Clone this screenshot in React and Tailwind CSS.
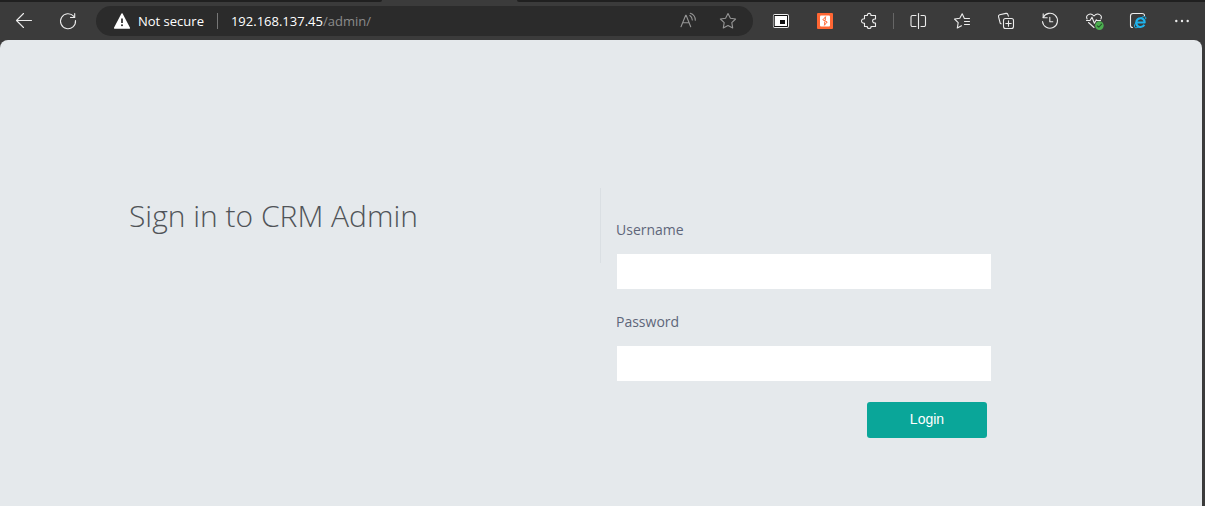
function Icon({ children, className = "" }) {
  return (
    <svg
      viewBox="0 0 20 20"
      className={"size-5 shrink-0 " + className}
      fill="none"
      stroke="currentColor"
      strokeWidth="1.1"
      strokeLinecap="round"
      strokeLinejoin="round"
      aria-hidden="true"
    >
      {children}
    </svg>
  );
}

function ToolButton({ label, children }) {
  return (
    <button type="button" aria-label={label} className="flex h-8 w-11 shrink-0 items-center justify-center text-[#ececec]">
      <Icon>{children}</Icon>
    </button>
  );
}

function AddressButton({ label, children }) {
  return (
    <button type="button" aria-label={label} className="flex h-7 w-10 shrink-0 items-center justify-center text-[#969696]">
      <Icon>{children}</Icon>
    </button>
  );
}

function AddressBar() {
  return (
    <div className="mx-1.5 flex h-[30px] min-w-0 flex-1 items-center rounded-full bg-[#2b2b2b] pr-[5px] pl-4 font-['Open_Sans',sans-serif] text-[13px] leading-5 text-white">
      <button type="button" className="flex shrink-0 items-center gap-1.5">
        <Icon>
          <path d="M10 3 L17.3 17 H2.7 Z" fill="#fff" stroke="#fff" strokeWidth="1.6" />
          <path d="M10 7.5 V12" stroke="#2b2b2b" strokeWidth="1.7" strokeLinecap="butt" />
          <circle cx="10" cy="14.3" r="1" fill="#2b2b2b" stroke="none" />
        </Icon>
        <span>Not secure</span>
      </button>
      <span className="mx-[13px] h-4 w-px shrink-0 bg-[#777777]" />
      <span className="min-w-0 flex-1 truncate">
        192.168.137.45<span className="text-[#8c8c8c]">/admin/</span>
      </span>
      <AddressButton label="Read aloud">
        <path d="M3 15.7 L7.7 4.3 H8.1 L12.7 15.7 M4.7 11.7 H11" />
        <path d="M11.8 4.5 C13.4 5.5 14.2 7 14.3 9" />
        <path d="M12.3 2.3 C15.5 3.3 17.2 5.6 17.3 9.2" />
      </AddressButton>
      <AddressButton label="Add to favorites">
        <path d="M10 2.5 L12.4 7.2 L17.6 8 L13.8 11.7 L14.7 16.9 L10 14.5 L5.3 16.9 L6.2 11.7 L2.4 8 L7.6 7.2 Z" />
      </AddressButton>
    </div>
  );
}

function Toolbar() {
  return (
    <header className="bg-[#3b3b3b]">
      <div className="flex h-0.5">
        <div className="w-[382px] rounded-br-sm bg-[#202020]" />
        <div className="w-[135px]" />
        <div className="flex-1 rounded-bl-sm bg-[#202020]" />
      </div>
      <nav className="flex h-[38px] items-center pr-px pl-0.5">
        <ToolButton label="Back">
          <path d="M17.5 9.5 H2.5 M9.5 2.5 L2.5 9.5 L9.5 16.5" />
        </ToolButton>
        <ToolButton label="Refresh">
          <path d="M17.5 9.5 A7.5 7.5 0 1 1 15.6 5.2 L16.5 6.3" />
          <path d="M16.7 2.5 V6.5 H12.5" />
        </ToolButton>
        <AddressBar />
        <ToolButton label="Picture in picture">
          <rect x="2.5" y="3.5" width="15" height="13" rx="1.5" />
          <rect x="3.5" y="4.5" width="13" height="11" fill="#fff" stroke="#111" strokeWidth="1" />
          <rect x="9" y="9" width="5" height="4" fill="#111" stroke="none" />
        </ToolButton>
        <ToolButton label="Burp Suite">
          <rect x="2" y="2" width="16" height="16" rx="1" fill="#ff6633" stroke="none" />
          <rect x="5" y="4.5" width="10" height="11" rx="1" fill="#fff" stroke="none" />
          <path d="M10.5 6 L7.8 8.8 L12.2 11 L9.5 14 M10.3 6 V9 M9.7 11 V14" stroke="#ff6633" strokeWidth="1" />
        </ToolButton>
        <ToolButton label="Extensions">
          <path d="M5.5 4.5 H8.4 C7.7 1.7 12.6 1.7 11.9 4.5 H16.5 V8 C12.6 7.4 12.6 12.6 16.5 12 V15.5 H12 C12.6 18.2 7.7 18.2 8.3 15.5 H5.5 V12.2 C1.5 12.6 1.5 7.4 5.5 7.8 Z" />
        </ToolButton>
        <span className="mx-0.5 h-4 w-px shrink-0 bg-[#666666]" />
        <ToolButton label="Split screen">
          <path d="M10.5 2.5 V17.5" />
          <path d="M8 4.5 H4.5 A1.5 1.5 0 0 0 3 6 V14 A1.5 1.5 0 0 0 4.5 15.5 H8" />
          <path d="M13 4.5 H16 A1.5 1.5 0 0 1 17.5 6 V14 A1.5 1.5 0 0 1 16 15.5 H13" />
        </ToolButton>
        <ToolButton label="Favorites">
          <path d="M17.5 7.5 H12.4 L10.2 2.7 L7.8 7.2 L2.5 8 L6.2 11.7 L5.3 17 L9.5 14.8" />
          <path d="M12.5 10.5 H17.5 M12.5 13.5 H17.5" />
        </ToolButton>
        <ToolButton label="Collections">
          <rect x="7.5" y="7.5" width="10" height="10" rx="2" />
          <path d="M12.5 9.8 V15.2 M9.8 12.5 H15.2" />
          <path d="M5.1 12.8 L4.2 12.2 L2.5 5.6 Q2.2 4.2 3.6 3.8 L10 2.4 Q11.3 2.1 11.8 3.4 L12.4 5.2" />
        </ToolButton>
        <ToolButton label="History">
          <path d="M3.2 6.5 A7.5 7.5 0 1 1 2.5 10.5" />
          <path d="M3.2 2.8 V6.8 H7.2 M9.8 6.3 V10.8 H12.8" />
        </ToolButton>
        <ToolButton label="Browser essentials">
          <path d="M3.1 8 C1.2 4.5 6.2 .8 10 5 C13.8 .8 18.8 4.5 16.9 8 M4.5 11.5 L10 16.5" />
          <path d="M2.5 9.5 H6 L8 6.2 L10.4 12.3 L12.3 8.8 L13 9.5 H16.5" />
          <circle cx="15.4" cy="14.6" r="4.3" fill="#4caf50" stroke="none" />
          <path d="M13.3 14.8 L14.8 16.1 L17.6 13.1" stroke="#24542a" />
        </ToolButton>
        <ToolButton label="Internet Explorer mode">
          <path d="M4.5 16.5 Q2.5 16.5 2.5 14.5 V5 Q2.5 2.5 5 2.5 H14 Q16.5 2.5 16.5 4.5" />
          <path d="M16.3 13.8 C14.7 17 8.3 17.2 8.3 11.6 C8.3 5.9 16.9 5.9 16.7 11.5 H8.5" stroke="#1eb4ee" strokeWidth="2.1" strokeLinecap="butt" />
          <path d="M10.2 16.2 C5.2 18.5 5.2 14 9.6 9.5 C13.2 5.8 18.8 3.6 17.8 7.8" stroke="#1eb4ee" strokeWidth="1" />
        </ToolButton>
        <ToolButton label="Settings and more">
          <g fill="currentColor" stroke="none">
            <circle cx="4.3" cy="10" r="1.2" />
            <circle cx="10" cy="10" r="1.2" />
            <circle cx="15.7" cy="10" r="1.2" />
          </g>
        </ToolButton>
      </nav>
    </header>
  );
}

function Field({ id, label, type }) {
  return (
    <div className="flex flex-col gap-[13px]">
      <label htmlFor={id} className="text-sm leading-5 text-[#5e667a]">
        {label}
      </label>
      <input
        id={id}
        name={id}
        type={type}
        className="h-[37px] w-full border border-[#e5e9ec] bg-white px-3 text-sm outline-none focus:border-[#b5bcc2]"
      />
    </div>
  );
}

function SignIn() {
  return (
    <main className="mr-[3px] flex-1 rounded-t-lg bg-[#e5e9ec] pt-[148px] pb-12 font-['Open_Sans',sans-serif]">
      <div className="mx-auto grid w-full max-w-[944px] grid-cols-2">
        <section className="h-[75px] border-r border-[#dadfe3] pt-2">
          <h1 className="text-[30px] leading-10 font-light whitespace-nowrap text-[#505458]">Sign in to CRM Admin</h1>
        </section>
        <form className="flex max-w-[391px] flex-col gap-[22px] pt-8 pl-[15px]" onSubmit={(e) => e.preventDefault()}>
          <Field id="username" label="Username" type="text" />
          <Field id="password" label="Password" type="password" />
          <button
            type="submit"
            className="-mt-0.5 mr-[5px] h-9 w-[120px] self-end rounded-[3px] bg-[#0aa699] pb-0.5 font-['Liberation_Sans',Arial,sans-serif] text-sm text-white"
          >
            Login
          </button>
        </form>
      </div>
    </main>
  );
}

export default function App() {
  return (
    <div className="flex min-h-screen flex-col bg-[#3b3b3b]">
      <Toolbar />
      <SignIn />
    </div>
  );
}
